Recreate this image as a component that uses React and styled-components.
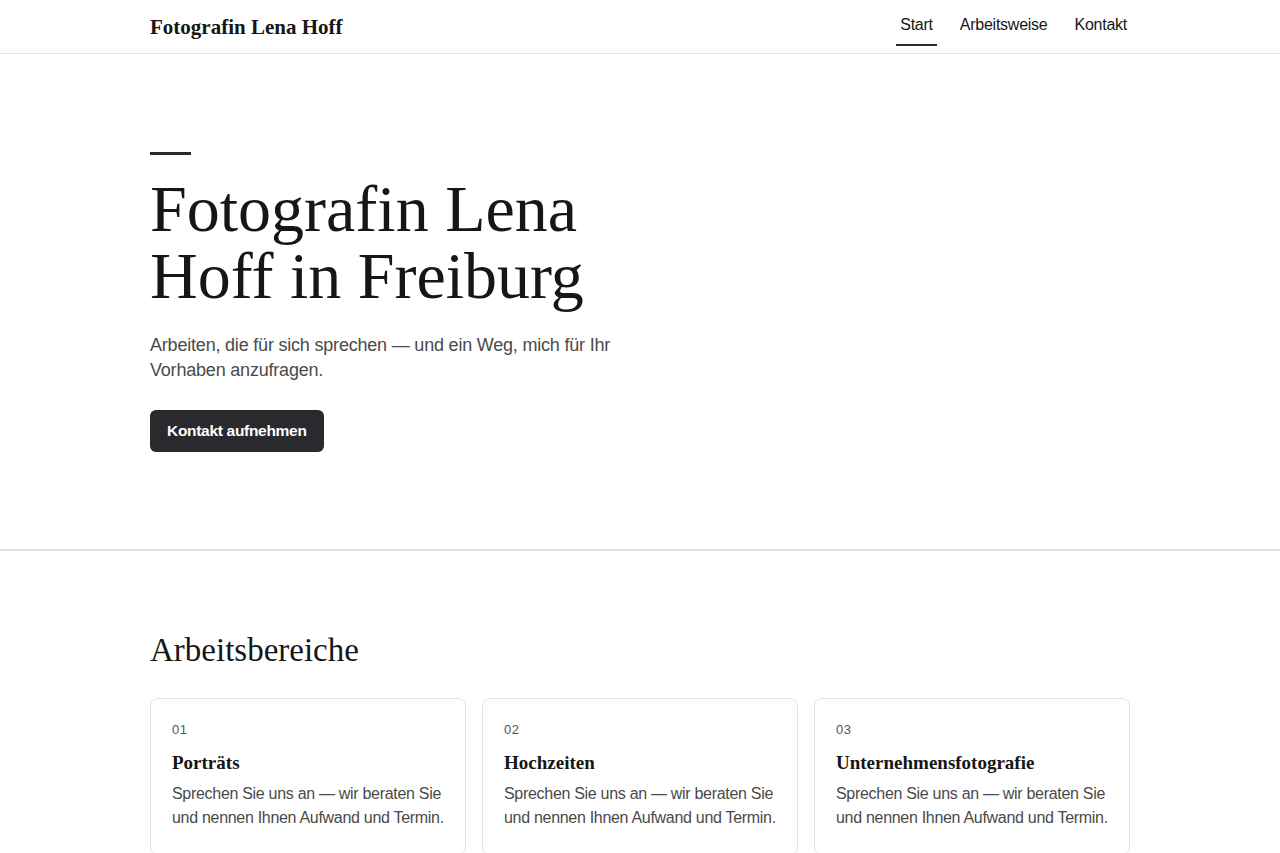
import React from "react";
import styled, { createGlobalStyle } from "styled-components";

const GlobalStyle = createGlobalStyle`
    * { box-sizing: border-box; }
    body {
        margin: 0;
        background: #fff;
        color: #161616;
        font-family: "Liberation Sans", Arial, sans-serif;
    }
`;

const serif = `"Liberation Serif", Georgia, serif`;

const Container = styled.div`
    width: 980px;
    margin: 0 auto;
`;

const Header = styled.header`
    height: 54px;
    border-bottom: 1px solid #e3e3e3;
`;

const HeaderInner = styled(Container)`
    height: 100%;
    display: flex;
    align-items: center;
    justify-content: space-between;
`;

const Logo = styled.a`
    font-family: ${serif};
    font-weight: 700;
    font-size: 21px;
    color: #161616;
    text-decoration: none;
    margin-top: 1px;
`;

const Nav = styled.nav`
    display: flex;
    align-items: stretch;
    height: 100%;
    gap: 21px;
`;

const NavLink = styled.a`
    display: flex;
    align-items: center;
    padding: 0 3px 4px;
    font-size: 16px;
    letter-spacing: -0.25px;
    color: #161616;
    text-decoration: none;
    position: relative;

    &::after {
        content: "";
        position: absolute;
        left: -1px;
        right: -1px;
        bottom: 7px;
        height: 2px;
        background: ${(props) => (props.$active ? "#2a2a2e" : "transparent")};
    }
`;

const Hero = styled.section`
    padding: 98px 0 97px;
    border-bottom: 2px solid #e2e2e2;
`;

const Dash = styled.div`
    width: 41px;
    height: 3px;
    background: #2a2a2e;
    margin-bottom: 20px;
`;

const Title = styled.h1`
    font-family: ${serif};
    font-weight: 400;
    font-size: 66px;
    line-height: 67px;
    margin: 0 0 24px;
    max-width: 480px;
    color: #161616;
`;

const Lead = styled.p`
    font-size: 18px;
    line-height: 25px;
    letter-spacing: -0.2px;
    color: #4a4a4a;
    margin: 0 0 27px;
    max-width: 480px;
`;

const Button = styled.a`
    display: inline-flex;
    align-items: center;
    height: 42px;
    padding: 0 17px;
    border-radius: 6px;
    background: #2a2a2e;
    color: #fff;
    font-weight: 700;
    font-size: 15.5px;
    letter-spacing: -0.3px;
    text-decoration: none;
`;

const Areas = styled.section`
    padding: 79px 0 0;
`;

const SectionTitle = styled.h2`
    font-family: ${serif};
    font-weight: 400;
    font-size: 33px;
    line-height: 40px;
    margin: 0 0 28px;
    color: #161616;
`;

const Grid = styled.div`
    display: grid;
    grid-template-columns: repeat(3, 1fr);
    gap: 16px;
`;

const Card = styled.div`
    border: 1px solid #e4e4e4;
    border-radius: 8px;
    padding: 23px 21px 24px;
`;

const Num = styled.div`
    font-size: 13px;
    color: #555;
    margin-bottom: 14px;
    letter-spacing: 0.5px;
`;

const CardTitle = styled.h3`
    font-family: ${serif};
    font-weight: 700;
    font-size: 19px;
    line-height: 24px;
    margin: 0 0 7px;
    color: #161616;
`;

const CardText = styled.p`
    font-size: 16px;
    line-height: 24px;
    letter-spacing: -0.3px;
    color: #4a4a4a;
    margin: 0;
`;

const areas = [
    { num: "01", title: "Porträts" },
    { num: "02", title: "Hochzeiten" },
    { num: "03", title: "Unternehmensfotografie" },
];

function App() {
    return (
        <>
            <GlobalStyle />
            <Header>
                <HeaderInner>
                    <Logo href="#">Fotografin Lena Hoff</Logo>
                    <Nav>
                        <NavLink href="#" $active>
                            Start
                        </NavLink>
                        <NavLink href="#">Arbeitsweise</NavLink>
                        <NavLink href="#">Kontakt</NavLink>
                    </Nav>
                </HeaderInner>
            </Header>
            <Hero>
                <Container>
                    <Dash />
                    <Title>Fotografin Lena Hoff in Freiburg</Title>
                    <Lead>Arbeiten, die für sich sprechen — und ein Weg, mich für Ihr Vorhaben anzufragen.</Lead>
                    <Button href="#">Kontakt aufnehmen</Button>
                </Container>
            </Hero>
            <Areas>
                <Container>
                    <SectionTitle>Arbeitsbereiche</SectionTitle>
                    <Grid>
                        {areas.map((a) => (
                            <Card key={a.num}>
                                <Num>{a.num}</Num>
                                <CardTitle>{a.title}</CardTitle>
                                <CardText>
                                    Sprechen Sie uns an — wir beraten Sie und nennen Ihnen Aufwand und Termin.
                                </CardText>
                            </Card>
                        ))}
                    </Grid>
                </Container>
            </Areas>
        </>
    );
}

export default App;
